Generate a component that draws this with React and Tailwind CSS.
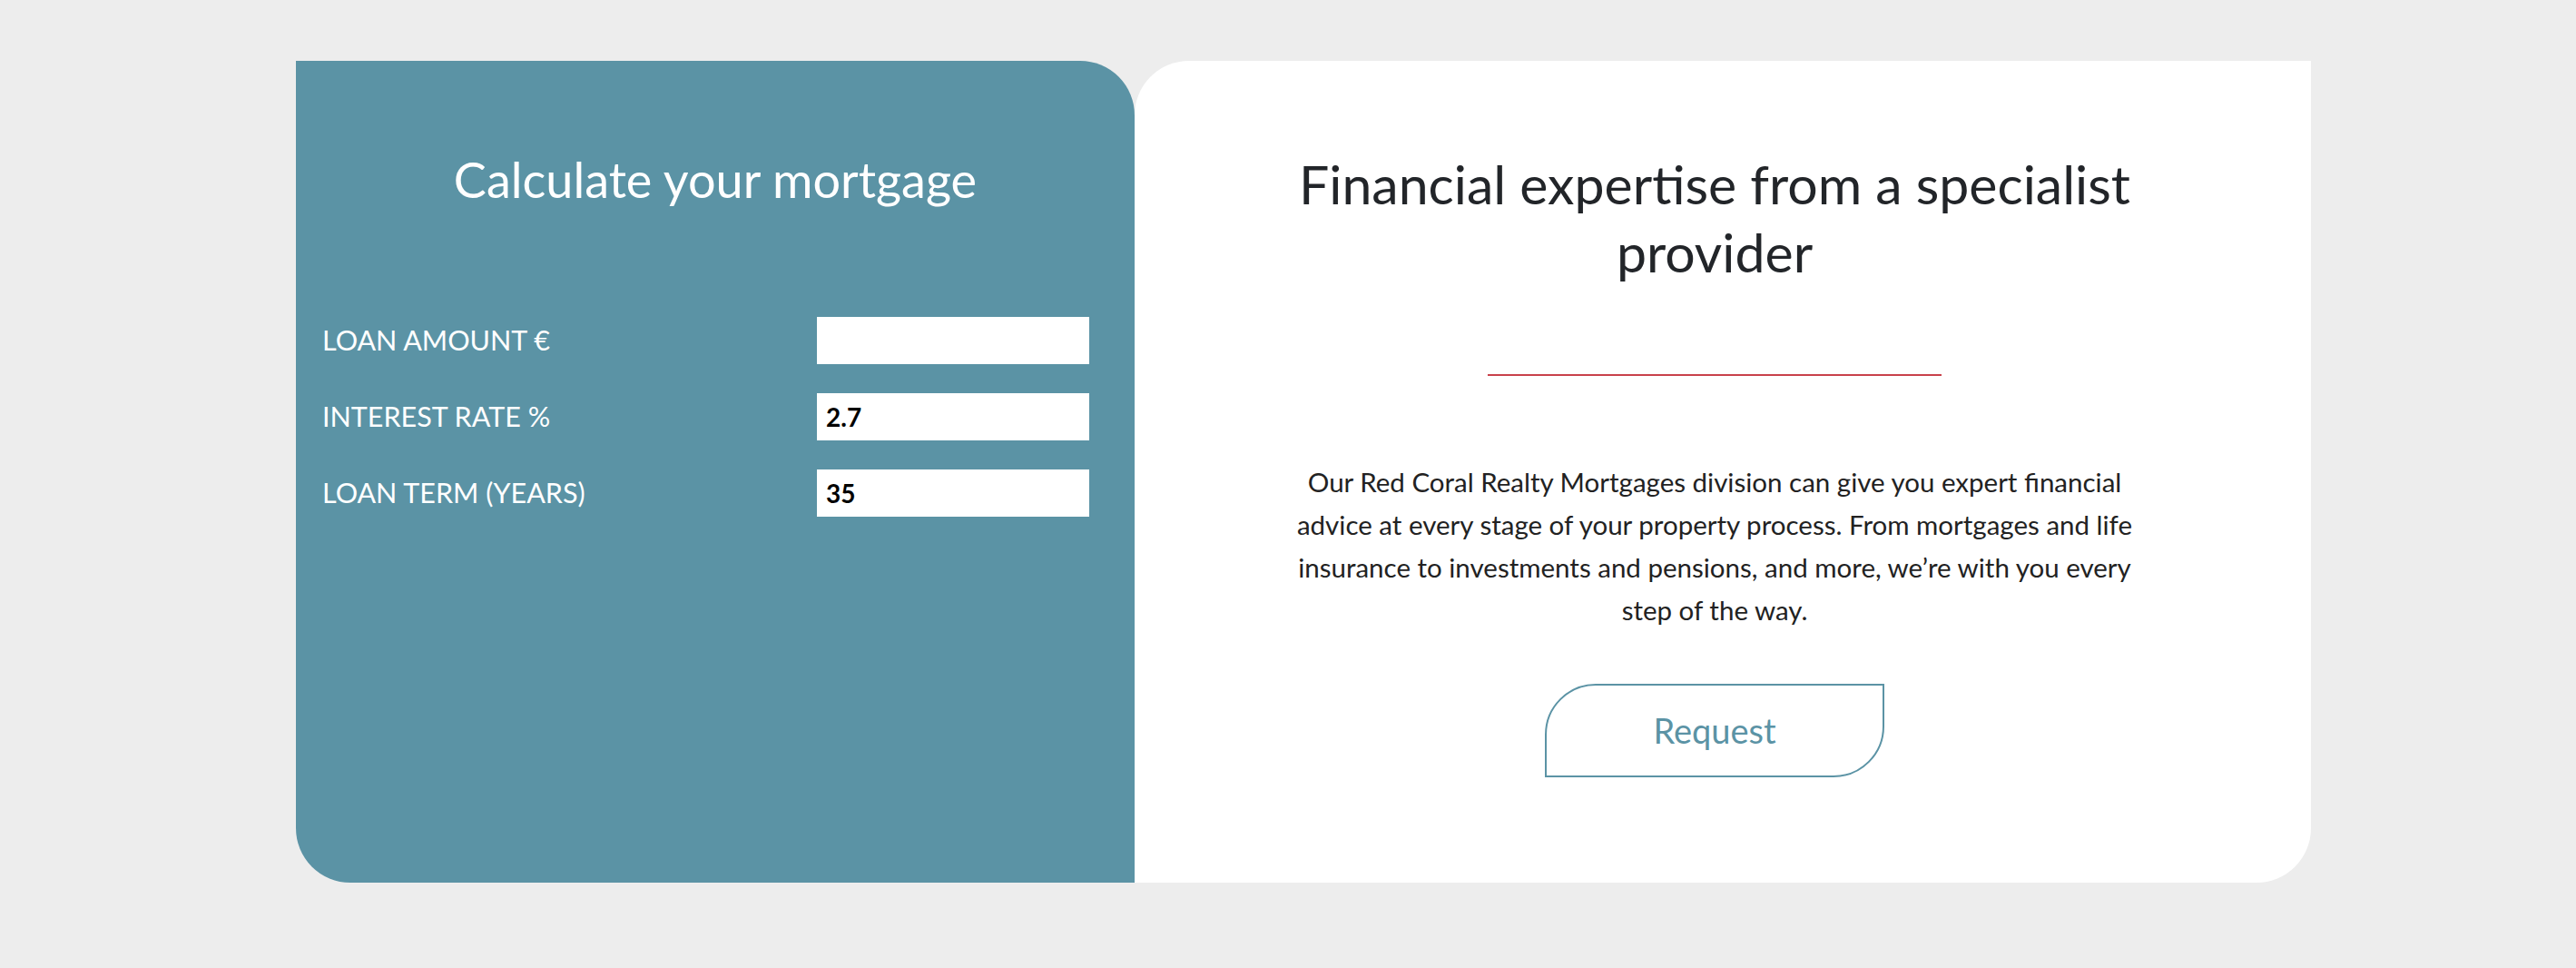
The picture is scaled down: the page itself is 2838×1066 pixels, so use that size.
import React from 'react';

const fields = [
  { label: 'LOAN AMOUNT €', value: '' },
  { label: 'INTEREST RATE %', value: '2.7' },
  { label: 'LOAN TERM (YEARS)', value: '35' },
];

const App = () => {
  return (
    <div className="min-h-[1066px] w-full bg-[#ededed] pt-[67px] pl-[326px] font-['Lato',sans-serif]">
      <div className="flex w-[2220px] h-[905px]">
        {/* calculator */}
        <div className="w-[924px] bg-[#5b93a5] rounded-tr-[60px] rounded-bl-[60px] pt-[99px] pl-[29px] pr-[50px]">
          <h2 className="text-white text-[54px] leading-[1.2] text-center pl-[21px]">Calculate your mortgage</h2>

          <div className="mt-[118px] flex flex-col gap-[32px]">
            {fields.map((f) => (
              <div key={f.label} className="flex items-center justify-between">
                <label className="text-white text-[30.5px]">{f.label}</label>
                <input
                  defaultValue={f.value}
                  className="w-[300px] h-[52px] bg-white px-[10px] text-[28px] font-bold text-black outline-none"
                />
              </div>
            ))}
          </div>
        </div>

        {/* info */}
        <div className="flex-1 bg-white rounded-tl-[60px] rounded-br-[60px] flex flex-col items-center pt-[98px] pr-[18px]">
          <h2 className="w-[960px] text-center text-[#222529] text-[59px] leading-[75px]">
            Financial expertise from a specialist provider
          </h2>

          <div className="mt-[97px] w-[500px] h-[2px] bg-[#c9424b]" />

          <p className="mt-[93px] w-[960px] text-center text-[#222] text-[29.5px] leading-[47px]">
            Our Red Coral Realty Mortgages division can give you expert financial advice at every stage of your property process. From mortgages and life insurance to investments and pensions, and more, we’re with you every step of the way.
          </p>

          <button className="mt-[58px] w-[374px] h-[103px] border-2 border-[#5b93a5] rounded-tl-[56px] rounded-br-[56px] text-[#5b93a5] text-[38px]">
            Request
          </button>
        </div>
      </div>
    </div>
  );
};

export default App;
